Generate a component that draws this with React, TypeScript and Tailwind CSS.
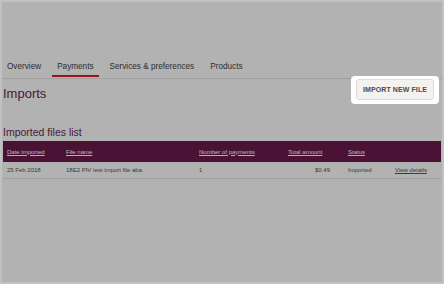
import React from 'react';

const tabs = ['Overview', 'Payments', 'Services & preferences', 'Products'];

const columns = ['Date imported', 'File name', 'Number of payments', 'Total amount', 'Status'];

const imports = [
  {
    date: '25 Feb 2018',
    file: '18E2 PIV test import file aba',
    count: '1',
    total: '$0.49',
    status: 'Imported',
  },
];

const App: React.FC = () => {
  return (
    <div className="w-[444px] h-[284px] bg-[#c1c1c1] p-[2px] font-['Liberation_Sans',Arial,sans-serif]">
      <div className="relative w-[440px] h-[280px] bg-white overflow-hidden">
        {/* Tabs */}
        <div className="mt-[60px] flex gap-[6px] border-b border-[#e4e4e4]">
          {tabs.map((tab) => (
            <div
              key={tab}
              className={`px-[5px] pb-[3px] mb-px text-[8.2px] leading-[10px] text-[#444] border-b-2 ${
                tab === 'Payments' ? 'border-[#d81e28]' : 'border-transparent'
              }`}
            >
              {tab}
            </div>
          ))}
        </div>

        <div className="px-px">
          {/* Heading row */}
          <div className="flex items-start justify-between">
            <h1 className="mt-[7px] text-[13px] leading-[15px] text-[#6a1f50]">Imports</h1>
            <div className="relative z-10 flex mr-[7px]">
              <div className="absolute -left-[5px] -right-[5px] -top-[3px] -bottom-[4px] bg-white rounded-[4px]" />
              <button className="relative w-[78px] h-[21px] bg-[#f3f2ef] border border-[#dedcd8] rounded-[3px] text-[7px] leading-[8px] font-bold text-[#474b52] tracking-[0.1px]">
                IMPORT NEW FILE
              </button>
            </div>
          </div>

          <h2 className="mt-[25px] mb-[2px] text-[10.5px] leading-[13px] text-[#6a1f50]">Imported files list</h2>

          {/* Table */}
          <div className="text-[6px] leading-[8px]">
            <div className="grid grid-cols-[59px_133px_89px_60px_47px_1fr] h-[21px] items-center bg-[#6a1a4d] text-white">
              {columns.map((c) => (
                <div key={c} className="pl-[4px] underline">
                  {c}
                </div>
              ))}
              <div />
            </div>
            {imports.map((row) => (
              <div
                key={row.file}
                className="grid grid-cols-[59px_133px_89px_60px_47px_1fr] h-[17px] items-center border-b border-[#e6e6e6] text-[#555]"
              >
                <div className="pl-[4px]">{row.date}</div>
                <div className="pl-[4px]">{row.file}</div>
                <div className="pl-[4px]">{row.count}</div>
                <div className="pr-[14px] text-right">{row.total}</div>
                <div className="pl-[4px]">{row.status}</div>
                <div className="pl-[4px] underline">View details</div>
              </div>
            ))}
          </div>
        </div>

        {/* Dim overlay */}
        <div className="absolute inset-0 z-[5] bg-black/30" />
      </div>
    </div>
  );
};

export default App;
